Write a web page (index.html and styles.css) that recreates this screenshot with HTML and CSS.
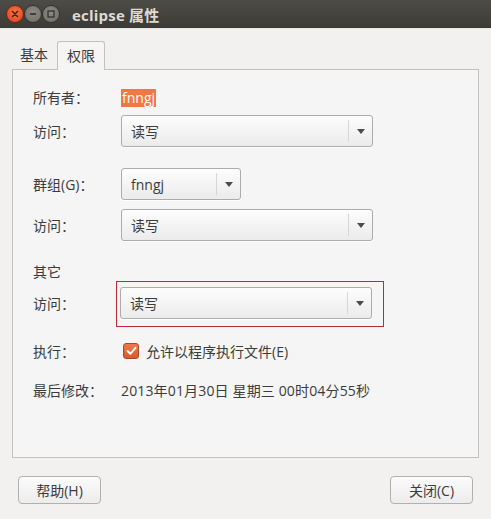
FILE: index.html
```html
<!DOCTYPE html>
<html lang="zh">
<head>
<meta charset="utf-8">
<title>eclipse 属性</title>
<link rel="stylesheet" href="styles.css">
</head>
<body>
<div class="window">
  <div class="titlebar">
    <div class="wbtns">
      <span class="wbtn close"><svg width="8" height="8" viewBox="0 0 8 8"><path d="M1.5 1.5 L6.5 6.5 M6.5 1.5 L1.5 6.5" stroke="#5a1a08" stroke-width="1.6" stroke-linecap="round"/></svg></span>
      <span class="wbtn"><svg width="10" height="10" viewBox="0 0 10 10"><path d="M2 5 H8" stroke="#2e2d2a" stroke-width="1.6"/></svg></span>
      <span class="wbtn"><svg width="10" height="10" viewBox="0 0 10 10"><rect x="2" y="2" width="6" height="6" fill="none" stroke="#2e2d2a" stroke-width="1.2"/></svg></span>
    </div>
    <div class="title">eclipse 属性</div>
  </div>
  <div class="content">
    <div class="tabs">
      <div class="tab">基本</div>
      <div class="tab active">权限</div>
    </div>
    <div class="panel">
      <div class="row r1">
        <div class="label">所有者：</div>
        <div class="value"><span class="sel">fnngj</span></div>
      </div>
      <div class="row r2">
        <div class="label">访问：</div>
        <div class="combo wide"><span class="ctext">读写</span><span class="carrow"><i></i></span></div>
      </div>
      <div class="row r3">
        <div class="label">群组(G)：</div>
        <div class="combo narrow"><span class="ctext">fnngj</span><span class="carrow"><i></i></span></div>
      </div>
      <div class="row r4">
        <div class="label">访问：</div>
        <div class="combo wide"><span class="ctext">读写</span><span class="carrow"><i></i></span></div>
      </div>
      <div class="row r5">
        <div class="label">其它</div>
      </div>
      <div class="row r6">
        <div class="label">访问：</div>
        <div class="mark">
          <div class="combo wide"><span class="ctext">读写</span><span class="carrow"><i></i></span></div>
        </div>
      </div>
      <div class="row r7">
        <div class="label">执行：</div>
        <div class="check">
          <span class="box"><svg width="11" height="10" viewBox="0 0 11 10"><path d="M1.5 5 L4.3 7.8 L9.5 1.8" fill="none" stroke="#fff" stroke-width="2" stroke-linecap="round" stroke-linejoin="round"/></svg></span>
          <span>允许以程序执行文件(E)</span>
        </div>
      </div>
      <div class="row r8">
        <div class="label">最后修改：</div>
        <div class="value date">2013年01月30日 星期三 00时04分55秒</div>
      </div>
    </div>
    <div class="actions">
      <button class="btn">帮助(H)</button>
      <button class="btn">关闭(C)</button>
    </div>
  </div>
</div>
</body>
</html>
```
FILE: styles.css
```css
* { box-sizing: border-box; }
html, body { margin: 0; padding: 0; }
body {
  width: 491px;
  height: 519px;
  background: #f2f1f0;
  font-family: "Open Sans", "Noto Sans CJK SC", sans-serif;
  font-size: 14px;
  color: #3c3c3c;
  overflow: hidden;
}
.window { width: 491px; height: 519px; }
.titlebar {
  height: 29px;
  background: linear-gradient(#4d4c47, #3b3a36);
  border-bottom: 1px solid #e9e7e2;
  display: flex;
  align-items: center;
  padding-left: 6px;
}
.wbtns { display: flex; align-items: center; }
.wbtn {
  width: 18px;
  height: 18px;
  border-radius: 50%;
  background: radial-gradient(circle at 50% 40%, #8c8a84, #6e6c67);
  border: 1px solid #35342f;
  display: flex;
  align-items: center;
  justify-content: center;
}
.wbtn.close {
  background: radial-gradient(circle at 50% 40%, #f5754a, #dc4216);
  border-color: #6f2a12;
}
.title {
  margin-left: 12px;
  color: #dfdbd2;
  font-weight: bold;
  font-size: 15px;
  letter-spacing: 0.2px;
}
.content { padding: 12px 12px 0 12px; }
.tabs {
  display: flex;
  align-items: flex-end;
  height: 28px;
}
.tab {
  height: 26px;
  line-height: 24px;
  padding: 0 8px;
  color: #3c3c3c;
}
.tab.active {
  height: 29px;
  line-height: 27px;
  margin-bottom: -1px;
  margin-left: 1px;
  background: #f5f5f5;
  border: 1px solid #c2c1be;
  border-bottom: none;
  border-radius: 3px 3px 0 0;
  padding: 0 9px;
  position: relative;
  z-index: 1;
}
.panel {
  height: 389px;
  background: #f5f5f5;
  border: 1px solid #c2c1be;
  padding: 0 20px;
}
.row {
  display: flex;
  align-items: center;
}
.label { width: 88px; flex: none; }
.r1 { margin-top: 18px; height: 18px; }
.r2 { margin-top: 9px; }
.r3 { margin-top: 21px; }
.r4 { margin-top: 9px; }
.r5 { margin-top: 21px; height: 18px; }
.r6 { margin-top: 7px; }
.r7 { margin-top: 23px; height: 18px; }
.r8 { margin-top: 21px; height: 18px; }
.sel {
  background: #f07746;
  color: #fff;
  padding: 0 1px;
  line-height: 18px;
  display: inline-block;
}
.date { letter-spacing: 0.15px; }
.combo {
  height: 32px;
  border: 1px solid #adaca8;
  border-radius: 3px;
  background: linear-gradient(#fdfdfd, #ebebeb);
  display: flex;
  align-items: center;
  box-shadow: 0 1px 0 #fff;
}
.combo.wide { width: 252px; }
.combo.narrow { width: 120px; }
.ctext { flex: 1; padding-left: 9px; }
.carrow {
  width: 24px;
  height: 22px;
  border-left: 1px solid #d6d6d4;
  display: flex;
  align-items: center;
  justify-content: center;
}
.carrow i {
  width: 0;
  height: 0;
  border-left: 4px solid transparent;
  border-right: 4px solid transparent;
  border-top: 5px solid #4b4b4b;
  margin-left: 1px;
}
.mark {
  border: 1px solid #c0283a;
  margin: -6px -12px -8px -5px;
  padding: 5px 11px 7px 3px;
}
.check { display: flex; align-items: center; margin-left: 2px; }
.box {
  width: 16px;
  height: 16px;
  border-radius: 3px;
  background: linear-gradient(#ec7a4d, #d85a2c);
  border: 1px solid #b2461f;
  display: flex;
  align-items: center;
  justify-content: center;
  margin-right: 7px;
}
.actions {
  display: flex;
  justify-content: space-between;
  padding: 18px 6px 0 6px;
}
.btn {
  width: 83px;
  height: 28px;
  border: 1px solid #b1b0ad;
  border-radius: 4px;
  background: linear-gradient(#fbfbfb, #ececec);
  font-family: "Open Sans", "Noto Sans CJK SC", sans-serif;
  font-size: 14px;
  color: #3c3c3c;
  padding: 0;
}
```
